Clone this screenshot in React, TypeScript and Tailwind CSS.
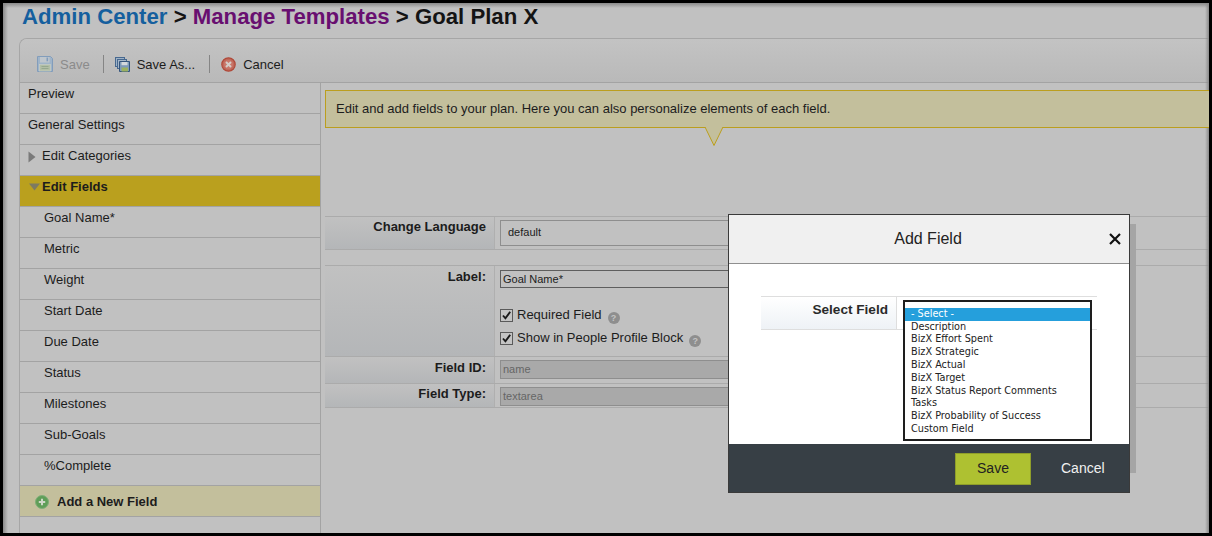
import React from "react";

const Floppy = () => (
  <svg width="16" height="16" viewBox="0 0 16 16">
    <path d="M0.5 0.5h13l2 2v13H0.5z" fill="#9fb4c9" stroke="#829dbb" />
    <rect x="3" y="1" width="9.5" height="5.5" fill="#bfc6cc" />
    <rect x="9.5" y="1.5" width="1.6" height="3.8" fill="#829dbb" />
    <rect x="2.5" y="8.5" width="11" height="6.5" fill="#b2bfa6" stroke="#c8cdc6" strokeWidth="0.7" />
    <path d="M4.5 10.5h7M4.5 12.5h7" stroke="#8fa28a" strokeWidth="0.8" />
  </svg>
);

const FloppyStack = () => (
  <svg width="15" height="15" viewBox="0 0 15 15">
    <rect x="0.5" y="0.5" width="9" height="9" fill="#9eb2c6" stroke="#47688f" />
    <rect x="2.5" y="2.5" width="9" height="9" fill="#a5b6c8" stroke="#47688f" />
    <path d="M4.5 4.5h10v10h-10z" fill="#7e9aba" stroke="#35547c" />
    <rect x="6.5" y="5" width="6" height="3.2" fill="#d4d8dc" />
    <rect x="6.5" y="10.5" width="6.5" height="4" fill="#9cb160" />
  </svg>
);

const CancelIcon = () => (
  <svg width="15" height="15" viewBox="0 0 15 15">
    <circle cx="7.5" cy="7.5" r="6.7" fill="#c0685a" stroke="#b04a3a" strokeWidth="1.2" />
    <circle cx="7.5" cy="7.5" r="4.6" fill="#c9776a" />
    <path d="M5 5l5 5M10 5l-5 5" stroke="#d4cdc8" strokeWidth="2" />
  </svg>
);

const Help = () => (
  <span className="ml-[6px] mt-[6px] inline-flex h-[12px] w-[12px] items-center justify-center rounded-full bg-[#8e8e8e] text-[9px] font-bold leading-none text-[#c4c4c4]">
    ?
  </span>
);

const Check = () => (
  <span className="mr-[4px] flex h-[13px] w-[13px] items-center justify-center border border-[#5a5a5a] bg-[#c4c4c4]">
    <svg width="11" height="11" viewBox="0 0 11 11">
      <path d="M2 5.5l2.4 2.8L9.2 1.8" fill="none" stroke="#1a1a1a" strokeWidth="1.9" />
    </svg>
  </span>
);

const NavItem = ({ children, indent = "pl-[8px]" }: { children: React.ReactNode; indent?: string }) => (
  <div className={`h-[31px] border-b border-[#a3a3a3] pt-[3px] text-[13px] leading-[16px] text-[#1c1c1c] ${indent}`}>
    {children}
  </div>
);

const options = [
  "Description",
  "BizX Effort Spent",
  "BizX Strategic",
  "BizX Actual",
  "BizX Target",
  "BizX Status Report Comments",
  "Tasks",
  "BizX Probability of Success",
  "Custom Field",
];

export default function App() {
  return (
    <div
      className="relative h-[536px] w-[1212px] overflow-hidden border-[3px] border-black bg-[#c1c1c1] text-[#1c1c1c]"
      style={{ fontFamily: '"Liberation Sans", Arial, sans-serif' }}
    >
      <div className="pointer-events-none absolute inset-y-0 left-0 w-[5px] bg-gradient-to-r from-[#8a8a8a] to-transparent" />
      <div className="pointer-events-none absolute inset-x-0 top-0 h-[5px] bg-gradient-to-b from-[#8a8a8a] to-transparent" />
      <div className="pointer-events-none absolute inset-y-0 right-0 w-[4px] bg-gradient-to-l from-[#8a8a8a] to-transparent" />

      <h1 className="h-[35px] pl-[19px] pt-[1px] text-[22.2px] font-bold leading-[25px] whitespace-nowrap">
        <span className="text-[#155f9e]">Admin Center</span>
        <span className="text-[#141414]"> &gt; </span>
        <span className="text-[#680f70]">Manage Templates</span>
        <span className="text-[#141414]"> &gt; Goal Plan X</span>
      </h1>

      <div className="ml-[16px] overflow-hidden rounded-tl-[8px] border-l border-t border-[#a6a6a6]">
        <div className="flex h-[44px] items-center border-b border-[#a3a3a3] bg-gradient-to-b from-[#c3c3c3] to-[#b9b9b9] pl-[17px] pt-[7px] text-[13px]">
          <Floppy />
          <span className="ml-[7px] mt-[2px] text-[#8b8b8b]">Save</span>
          <span className="ml-[13px] mr-[11px] h-[18px] w-px bg-[#858585]" />
          <FloppyStack />
          <span className="ml-[7px] mt-[2px] text-[#1c1c1c]">Save As...</span>
          <span className="ml-[14px] mr-[11px] h-[18px] w-px bg-[#858585]" />
          <CancelIcon />
          <span className="ml-[7px] mt-[2px] text-[#1c1c1c]">Cancel</span>
        </div>

        <div className="flex h-[451px]">
          <nav className="w-[301px] shrink-0 border-r border-[#a3a3a3]">
            <NavItem>Preview</NavItem>
            <NavItem>General Settings</NavItem>
            <div className="flex h-[31px] border-b border-[#a3a3a3] pl-[8px] pt-[3px] text-[13px] leading-[16px]">
              <svg width="8" height="12" viewBox="0 0 8 12" className="mr-[6px] mt-[3px]">
                <path d="M0.5 0.5L7.5 6L0.5 11.5z" fill="#7a7a7a" />
              </svg>
              Edit Categories
            </div>
            <div className="flex h-[31px] border-b border-[#a3a3a3] bg-[#baa01e] pl-[9px] pt-[3px] text-[13px] font-bold leading-[16px]">
              <svg width="11" height="8" viewBox="0 0 11 8" className="mr-[2px] mt-[4px]">
                <path d="M0 0.5h11L5.5 7.5z" fill="#7d7a62" />
              </svg>
              Edit Fields
            </div>
            {["Goal Name*", "Metric", "Weight", "Start Date", "Due Date", "Status", "Milestones", "Sub-Goals", "%Complete"].map((t) => (
              <NavItem key={t} indent="pl-[24px]">
                {t}
              </NavItem>
            ))}
            <div className="flex h-[31px] items-center border-b border-[#a3a3a3] bg-[#c3bf9c] pl-[15px] pt-[1px] text-[13px] font-bold">
              <svg width="14" height="14" viewBox="0 0 14 14" className="mr-[8px]">
                <circle cx="7" cy="7" r="6.5" fill="#5f9e58" stroke="#7fae78" />
                <path d="M7 3.8v6.4M3.8 7h6.4" stroke="#cfd8c8" strokeWidth="2" />
              </svg>
              Add a New Field
            </div>
          </nav>

          <main className="min-w-0 flex-1 pl-[4px] pt-[7px]">
            <div className="relative flex h-[38px] items-center border border-r-0 border-[#bb9e1e] bg-[#c3bf9c] pl-[10px] text-[13px]">
              Edit and add fields to your plan. Here you can also personalize elements of each field.
              <svg width="20" height="20" viewBox="0 0 20 20" className="absolute left-[378px] top-[36px]">
                <path d="M1 0L10 18.5L19 0" fill="#c3bf9c" stroke="#bb9e1e" strokeWidth="1" />
              </svg>
            </div>

            <div className="mt-[88px] flex h-[34px] border-y border-[#ababab]">
              <div className="w-[170px] border-r border-[#afafaf] bg-gradient-to-b from-[#c1c1c1] to-[#b4b6b8] pr-[8px] pt-[2px] text-right text-[13px] font-bold leading-[16px]">
                Change Language
              </div>
              <div className="flex-1 px-[5px] py-[3px]">
                <div className="flex h-[26px] w-[400px] items-center border border-[#8e8e8e] pb-[2px] pl-[7px] text-[11px]">default</div>
              </div>
            </div>

            <div className="mt-[15px] flex h-[92px] border-y border-[#ababab]">
              <div className="w-[170px] border-r border-[#afafaf] bg-gradient-to-b from-[#c1c1c1] to-[#b4b6b8] pr-[8px] pt-[2px] text-right text-[13px] font-bold leading-[18px]">
                Label:
              </div>
              <div className="flex-1 pl-[5px] pt-[4px]">
                <div className="flex h-[18px] w-[400px] items-center border border-[#5e5e5e] pl-[2px] text-[11px]">Goal Name*</div>
                <div className="mt-[18px] flex h-[18px] items-center text-[13px]">
                  <Check />
                  Required Field
                  <Help />
                </div>
                <div className="mt-[5px] flex h-[18px] items-center text-[13px]">
                  <Check />
                  Show in People Profile Block
                  <Help />
                </div>
              </div>
            </div>

            <div className="flex h-[27px] border-b border-[#ababab]">
              <div className="w-[170px] border-r border-[#afafaf] bg-gradient-to-b from-[#c1c1c1] to-[#b4b6b8] pr-[8px] pt-[2px] text-right text-[13px] font-bold leading-[18px]">
                Field ID:
              </div>
              <div className="flex-1 pl-[5px] pt-[3px]">
                <div className="flex h-[19px] w-[400px] items-center border border-[#8e8e8e] bg-[#a9a9a9] pl-[2px] text-[11px] text-[#666]">name</div>
              </div>
            </div>
            <div className="flex h-[24px] border-b border-[#ababab]">
              <div className="w-[170px] border-r border-[#afafaf] bg-gradient-to-b from-[#c1c1c1] to-[#b4b6b8] pr-[8px] pt-[1px] text-right text-[13px] font-bold leading-[18px]">
                Field Type:
              </div>
              <div className="flex-1 pl-[5px] pt-[3px]">
                <div className="flex h-[19px] w-[400px] items-center border border-[#8e8e8e] bg-[#a9a9a9] pb-[1px] pl-[2px] text-[11px] text-[#666]">textarea</div>
              </div>
            </div>
          </main>
        </div>
      </div>

      <div className="absolute left-[732px] top-[221px] h-[249px] w-[401px] bg-[#a5a5a5]" />

      <div className="absolute left-[725px] top-[211px] flex h-[279px] w-[402px] flex-col border border-[#3a3a3a] bg-white">
        <div className="relative flex h-[49px] shrink-0 items-center justify-center border-b border-[#8f8f8f] bg-[#f0f0f0] pr-[2px] text-[16px] text-[#222]">
          Add Field
          <svg width="12" height="12" viewBox="0 0 12 12" className="absolute right-[8px] top-[18px]">
            <path d="M1 1l10 10M11 1L1 11" stroke="#111" strokeWidth="2.2" />
          </svg>
        </div>
        <div className="relative flex-1">
          <div className="absolute left-[32px] top-[32px] flex h-[34px] w-[336px] border-y border-[#dedede]">
            <div className="w-[136px] border-r border-[#dedede] bg-gradient-to-b from-white to-[#eef2f6] pr-[8px] pt-[5px] text-right text-[13.6px] font-bold leading-[16px] text-[#2a2a2a]">
              Select Field
            </div>
          </div>
          <div
            className="absolute left-[174px] top-[36px] h-[141px] w-[189px] border-2 border-[#1e1e1e] bg-white pt-[5.75px] text-[9.7px] leading-[12.8px] text-[#222]"
            style={{ fontFamily: '"DejaVu Sans", Verdana, sans-serif' }}
          >
            <div className="bg-[#259fdc] pl-[6px] text-white">- Select -</div>
            {options.map((o) => (
              <div key={o} className="whitespace-nowrap pl-[6px]">
                {o}
              </div>
            ))}
          </div>
        </div>
        <div className="flex h-[48px] shrink-0 items-center bg-[#373f45] pl-[226px] pt-[1px]">
          <div className="flex h-[32px] w-[76px] items-center justify-center border border-[#8f9e2a] bg-[#aec131] text-[14px] text-[#222]">
            Save
          </div>
          <span className="ml-[30px] text-[14px] text-[#f1f1f1]">Cancel</span>
        </div>
      </div>
    </div>
  );
}
